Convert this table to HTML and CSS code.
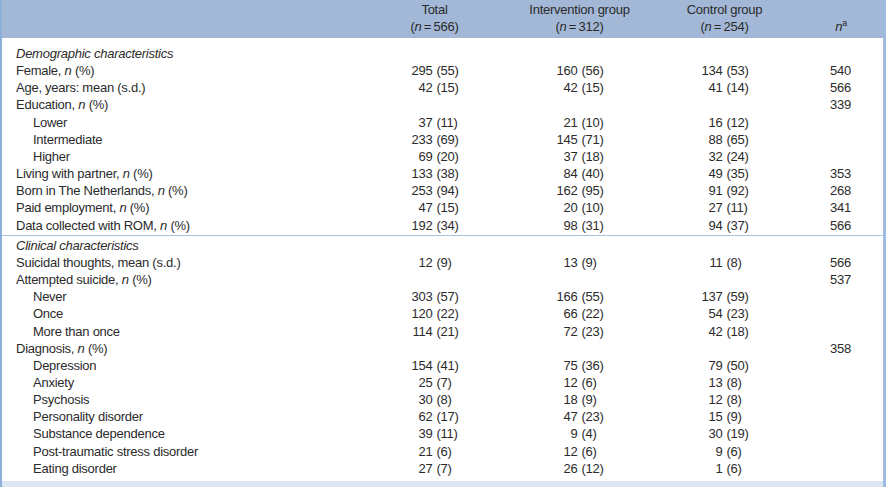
FILE: index.html
```html
<!DOCTYPE html>
<html>
<head>
<meta charset="utf-8">
<link rel="stylesheet" href="styles.css">
</head>
<body>
<div class="frame">
<table class="tbl">
<colgroup>
<col class="c-label"><col class="c-grp"><col class="c-grp"><col class="c-grp"><col class="c-n">
</colgroup>
<thead>
<tr>
<th></th>
<th>Total<br>(<i>n</i>&#8201;=&#8201;566)</th>
<th>Intervention group<br>(<i>n</i>&#8201;=&#8201;312)</th>
<th>Control group<br>(<i>n</i>&#8201;=&#8201;254)</th>
<th class="nh"><br><i>n</i><sup>a</sup></th>
</tr>
</thead>
<tbody class="sec first">
<tr><td class="lab sect">Demographic characteristics</td><td></td><td></td><td></td><td></td></tr>
<tr><td class="lab">Female, <i>n</i> (%)</td><td><span class="v"><span>295</span><span>(55)</span></span></td><td><span class="v"><span>160</span><span>(56)</span></span></td><td><span class="v"><span>134</span><span>(53)</span></span></td><td class="n">540</td></tr>
<tr><td class="lab">Age, years: mean (s.d.)</td><td><span class="v"><span>42</span><span>(15)</span></span></td><td><span class="v"><span>42</span><span>(15)</span></span></td><td><span class="v"><span>41</span><span>(14)</span></span></td><td class="n">566</td></tr>
<tr><td class="lab">Education, <i>n</i> (%)</td><td></td><td></td><td></td><td class="n">339</td></tr>
<tr><td class="lab sub">Lower</td><td><span class="v"><span>37</span><span>(11)</span></span></td><td><span class="v"><span>21</span><span>(10)</span></span></td><td><span class="v"><span>16</span><span>(12)</span></span></td><td class="n"></td></tr>
<tr><td class="lab sub">Intermediate</td><td><span class="v"><span>233</span><span>(69)</span></span></td><td><span class="v"><span>145</span><span>(71)</span></span></td><td><span class="v"><span>88</span><span>(65)</span></span></td><td class="n"></td></tr>
<tr><td class="lab sub">Higher</td><td><span class="v"><span>69</span><span>(20)</span></span></td><td><span class="v"><span>37</span><span>(18)</span></span></td><td><span class="v"><span>32</span><span>(24)</span></span></td><td class="n"></td></tr>
<tr><td class="lab">Living with partner, <i>n</i> (%)</td><td><span class="v"><span>133</span><span>(38)</span></span></td><td><span class="v"><span>84</span><span>(40)</span></span></td><td><span class="v"><span>49</span><span>(35)</span></span></td><td class="n">353</td></tr>
<tr><td class="lab">Born in The Netherlands, <i>n</i> (%)</td><td><span class="v"><span>253</span><span>(94)</span></span></td><td><span class="v"><span>162</span><span>(95)</span></span></td><td><span class="v"><span>91</span><span>(92)</span></span></td><td class="n">268</td></tr>
<tr><td class="lab">Paid employment, <i>n</i> (%)</td><td><span class="v"><span>47</span><span>(15)</span></span></td><td><span class="v"><span>20</span><span>(10)</span></span></td><td><span class="v"><span>27</span><span>(11)</span></span></td><td class="n">341</td></tr>
<tr class="last"><td class="lab">Data collected with ROM, <i>n</i> (%)</td><td><span class="v"><span>192</span><span>(34)</span></span></td><td><span class="v"><span>98</span><span>(31)</span></span></td><td><span class="v"><span>94</span><span>(37)</span></span></td><td class="n">566</td></tr>
</tbody>
<tbody class="sec second">
<tr><td class="lab sect">Clinical characteristics</td><td></td><td></td><td></td><td></td></tr>
<tr><td class="lab">Suicidal thoughts, mean (s.d.)</td><td><span class="v"><span>12</span><span>(9)</span></span></td><td><span class="v"><span>13</span><span>(9)</span></span></td><td><span class="v"><span>11</span><span>(8)</span></span></td><td class="n">566</td></tr>
<tr><td class="lab">Attempted suicide, <i>n</i> (%)</td><td></td><td></td><td></td><td class="n">537</td></tr>
<tr><td class="lab sub">Never</td><td><span class="v"><span>303</span><span>(57)</span></span></td><td><span class="v"><span>166</span><span>(55)</span></span></td><td><span class="v"><span>137</span><span>(59)</span></span></td><td class="n"></td></tr>
<tr><td class="lab sub">Once</td><td><span class="v"><span>120</span><span>(22)</span></span></td><td><span class="v"><span>66</span><span>(22)</span></span></td><td><span class="v"><span>54</span><span>(23)</span></span></td><td class="n"></td></tr>
<tr><td class="lab sub">More than once</td><td><span class="v"><span>114</span><span>(21)</span></span></td><td><span class="v"><span>72</span><span>(23)</span></span></td><td><span class="v"><span>42</span><span>(18)</span></span></td><td class="n"></td></tr>
<tr><td class="lab">Diagnosis, <i>n</i> (%)</td><td></td><td></td><td></td><td class="n">358</td></tr>
<tr><td class="lab sub">Depression</td><td><span class="v"><span>154</span><span>(41)</span></span></td><td><span class="v"><span>75</span><span>(36)</span></span></td><td><span class="v"><span>79</span><span>(50)</span></span></td><td class="n"></td></tr>
<tr><td class="lab sub">Anxiety</td><td><span class="v"><span>25</span><span>(7)</span></span></td><td><span class="v"><span>12</span><span>(6)</span></span></td><td><span class="v"><span>13</span><span>(8)</span></span></td><td class="n"></td></tr>
<tr><td class="lab sub">Psychosis</td><td><span class="v"><span>30</span><span>(8)</span></span></td><td><span class="v"><span>18</span><span>(9)</span></span></td><td><span class="v"><span>12</span><span>(8)</span></span></td><td class="n"></td></tr>
<tr><td class="lab sub">Personality disorder</td><td><span class="v"><span>62</span><span>(17)</span></span></td><td><span class="v"><span>47</span><span>(23)</span></span></td><td><span class="v"><span>15</span><span>(9)</span></span></td><td class="n"></td></tr>
<tr><td class="lab sub">Substance dependence</td><td><span class="v"><span>39</span><span>(11)</span></span></td><td><span class="v"><span>9</span><span>(4)</span></span></td><td><span class="v"><span>30</span><span>(19)</span></span></td><td class="n"></td></tr>
<tr><td class="lab sub">Post-traumatic stress disorder</td><td><span class="v"><span>21</span><span>(6)</span></span></td><td><span class="v"><span>12</span><span>(6)</span></span></td><td><span class="v"><span>9</span><span>(6)</span></span></td><td class="n"></td></tr>
<tr class="last"><td class="lab sub">Eating disorder</td><td><span class="v"><span>27</span><span>(7)</span></span></td><td><span class="v"><span>26</span><span>(12)</span></span></td><td><span class="v"><span>1</span><span>(6)</span></span></td><td class="n"></td></tr>
</tbody>
</table>
<div class="foot"></div>
</div>
</body>
</html>
```
FILE: styles.css
```css
html, body {
  margin: 0;
  padding: 0;
  background: #ffffff;
}
body {
  font-family: "Liberation Sans", Arial, sans-serif;
  font-size: 13px;
  letter-spacing: -0.25px;
  color: #2b2b2b;
}
.frame {
  width: 886px;
  height: 487px;
  box-sizing: border-box;
  border-left: 2px solid #8db0d8;
  border-right: 3px solid #9fbbe0;
  display: flex;
  flex-direction: column;
  overflow: hidden;
}
.tbl {
  width: 881px;
  border-collapse: collapse;
  table-layout: fixed;
}
.c-label { width: 360px; }
.c-grp { width: 145px; }
.c-n { width: 86px; }
thead tr {
  background: #a3b8d7;
}
thead th {
  font-weight: normal;
  text-align: center;
  line-height: 17px;
  padding: 1px 0 3px 0;
  height: 34px;
  vertical-align: top;
  color: #2a2a2a;
}
thead th.nh {
  text-align: right;
  padding-right: 36px;
}
sup {
  font-size: 9px;
  line-height: 0;
  vertical-align: 5px;
}
td {
  padding: 0;
  line-height: 17.15px;
  white-space: nowrap;
}
.first tr:first-child td { padding-top: 7px; }
.first tr.last td { padding-bottom: 1px; }
.second tr:first-child td { padding-top: 1px; }
.first tr.last { border-bottom: 1px solid #a9c2de; }
.lab { padding-left: 14px; }
.lab.sub { padding-left: 31px; }
.sect { font-style: italic; }
.v {
  display: grid;
  grid-template-columns: 1fr 1fr;
  column-gap: 4px;
}
.v span:first-child { text-align: right; }
.v span:last-child { text-align: left; }
td.n {
  text-align: right;
  padding-right: 32px;
}
.foot {
  margin-top: auto;
  height: 6px;
  background: #dce6f2;
}
```
